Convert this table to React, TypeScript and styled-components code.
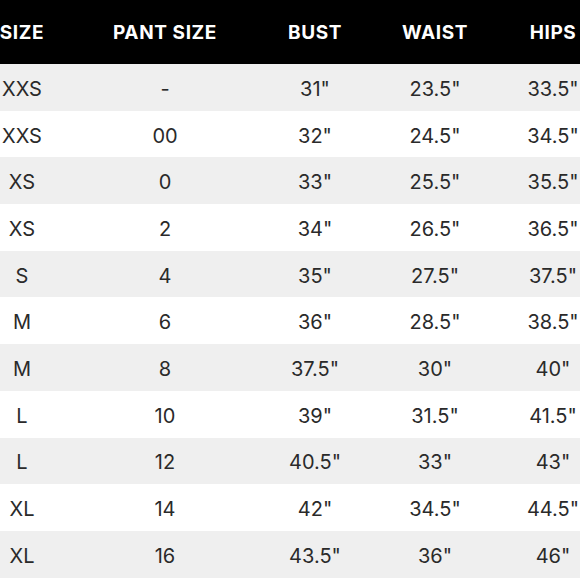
import { createGlobalStyle } from "styled-components";
import styled from "styled-components";

const GlobalStyle = createGlobalStyle`
  html, body {
    margin: 0;
    padding: 0;
    background: #ffffff;
    overflow: hidden;
  }
  body {
    font-family: Inter, "Liberation Sans", Arial, sans-serif;
  }
`;

const columns = "144px 142px 158px 82px 154px";

const Viewport = styled.div`
  width: 580px;
  height: 580px;
  overflow: hidden;
`;

const Table = styled.div`
  width: 680px;
  margin-left: -50px;
  display: flex;
  flex-direction: column;
`;

const HeaderRow = styled.div`
  display: grid;
  grid-template-columns: ${columns};
  height: 64px;
  align-items: center;
  background: #000000;
`;

const HeaderCell = styled.div`
  text-align: center;
  color: #ffffff;
  font-size: 19px;
  font-weight: 700;
  letter-spacing: 0.6px;
  white-space: nowrap;
`;

const Row = styled.div<{ $striped: boolean }>`
  display: grid;
  grid-template-columns: ${columns};
  height: 46.7px;
  align-items: center;
  background: ${(p) => (p.$striped ? "#efefef" : "#ffffff")};
`;

const Cell = styled.div`
  text-align: center;
  color: #2a2a2a;
  font-size: 20px;
  font-weight: 400;
  white-space: nowrap;
  padding-top: 3px;
`;

const headers = ["SIZE", "PANT SIZE", "BUST", "WAIST", "HIPS"];

const sizes = [
    ["XXS", "-", "31\"", "23.5\"", "33.5\""],
    ["XXS", "00", "32\"", "24.5\"", "34.5\""],
    ["XS", "0", "33\"", "25.5\"", "35.5\""],
    ["XS", "2", "34\"", "26.5\"", "36.5\""],
    ["S", "4", "35\"", "27.5\"", "37.5\""],
    ["M", "6", "36\"", "28.5\"", "38.5\""],
    ["M", "8", "37.5\"", "30\"", "40\""],
    ["L", "10", "39\"", "31.5\"", "41.5\""],
    ["L", "12", "40.5\"", "33\"", "43\""],
    ["XL", "14", "42\"", "34.5\"", "44.5\""],
    ["XL", "16", "43.5\"", "36\"", "46\""],
];

const App = () => {
    return (
        <Viewport>
            <GlobalStyle />
            <Table>
                <HeaderRow>
                    {headers.map((h) => <HeaderCell key={h}>{h}</HeaderCell>)}
                </HeaderRow>
                {sizes.map((row, i) => (
                    <Row key={i} $striped={i % 2 === 0}>
                        {row.map((value, j) => <Cell key={j}>{value}</Cell>)}
                    </Row>
                ))}
            </Table>
        </Viewport>
    );
};

export default App;
